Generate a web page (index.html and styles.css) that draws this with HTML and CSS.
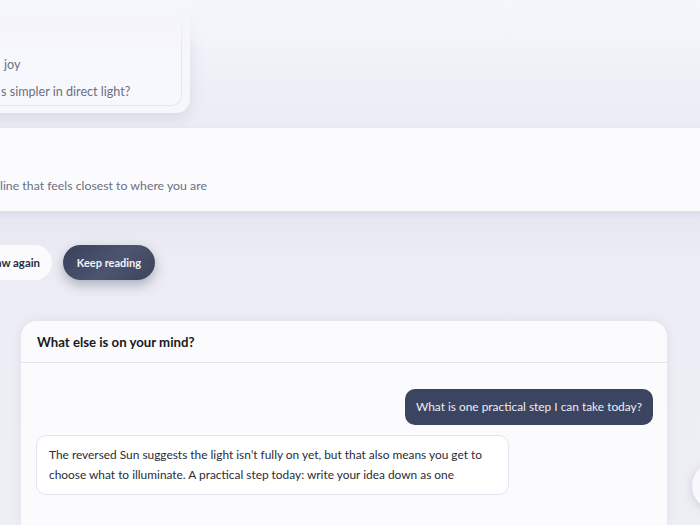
FILE: index.html
```html
<!DOCTYPE html>
<html lang="en">
<head>
<meta charset="utf-8">
<title>Reading</title>
<link rel="stylesheet" href="styles.css">
</head>
<body>
<div class="stage">
  <div class="top-card">
    <div class="prompt-box">
      <p class="prompt-line prompt-joy">joy</p>
      <p class="prompt-line">s simpler in direct light?</p>
    </div>
  </div>

  <div class="panel">
    <p class="panel-text">line that feels closest to where you are</p>
  </div>

  <div class="actions">
    <button class="pill pill-light">Draw again</button>
    <button class="pill pill-dark">Keep reading</button>
  </div>

  <section class="chat">
    <header class="chat-head">What else is on your mind?</header>
    <div class="chat-body">
      <div class="msg msg-user">What is one practical step I can take today?</div>
      <div class="msg msg-bot">The reversed Sun suggests the light isn’t fully on yet, but that also means you get to choose what to illuminate. A practical step today: write your idea down as one</div>
    </div>
  </section>

  <div class="top-fade"></div>
  <div class="fab"></div>
</div>
</body>
</html>
```

FILE: styles.css
```css
* { box-sizing: border-box; }
html, body {
  margin: 0;
  width: 700px;
  height: 525px;
  overflow: hidden;
}
body {
  font-family: "Lato", "Open Sans", "Liberation Sans", sans-serif;
  background: linear-gradient(180deg, #f4f4fb 0px, #f2f2f9 45px, #eeeef6 90px, #ececf4 128px, #e6e7ef 215px, #ececf4 260px, #eeeef5 525px);
  color: #2a2c38;
}
.stage {
  position: relative;
  width: 700px;
  height: 525px;
  display: flex;
  flex-direction: column;
}
p { margin: 0; }

.top-card {
  width: 400px;
  height: 113px;
  margin-left: -210px;
  padding: 0 8px 7px 8px;
  background: #f6f7fc;
  border-radius: 0 0 14px 14px;
  box-shadow: 0 6px 14px rgba(150, 152, 180, 0.22);
  display: flex;
  flex-direction: column;
  justify-content: flex-end;
}
.prompt-box {
  height: 100px;
  border: 1px solid #e4e5ee;
  border-top: none;
  border-radius: 0 0 10px 10px;
  background: #f7f8fd;
  padding: 0 0 0 202px;
  display: flex;
  flex-direction: column;
  justify-content: flex-end;
}
.prompt-line {
  font-size: 12.6px;
  line-height: 27px;
  color: #6c6f82;
  white-space: nowrap;
}
.prompt-joy { padding-left: 3px; }

.top-fade {
  position: absolute;
  left: 0;
  top: 0;
  width: 700px;
  height: 52px;
  background: linear-gradient(180deg, rgba(245, 245, 252, 0.96) 0%, rgba(244, 244, 251, 0.75) 55%, rgba(244, 244, 251, 0) 100%);
  pointer-events: none;
}

.panel {
  margin-top: 15px;
  height: 84px;
  margin-left: -20px;
  margin-right: -20px;
  background: #fbfbfe;
  border-bottom: 1px solid #e0e1ea;
  box-shadow: 0 2px 6px rgba(150, 152, 180, 0.15);
  display: flex;
  align-items: flex-end;
  padding: 0 0 17px 20px;
}
.panel-text {
  font-size: 12.3px;
  line-height: 16px;
  color: #6c6f82;
  white-space: nowrap;
}

.actions {
  margin-top: 33px;
  height: 35px;
  display: flex;
  gap: 11px;
}
.pill {
  height: 35px;
  border: none;
  border-radius: 18px;
  font-family: inherit;
  font-weight: 700;
  font-size: 11px;
  padding: 0 14px;
  white-space: nowrap;
}
.pill-light {
  width: 120px;
  margin-left: -68px;
  text-align: right;
  padding-right: 12px;
  font-size: 11.4px;
  background: #fbfbfe;
  color: #2a2d3a;
  overflow: hidden;
}
.pill-dark {
  width: 92px;
  padding: 0;
  text-align: center;
  color: #f3f4f8;
  background: linear-gradient(135deg, #3a4159 0%, #4c5470 55%, #3c435b 100%);
  box-shadow: 0 5px 12px rgba(55, 62, 90, 0.35);
}

.chat {
  margin-top: 41px;
  margin-left: 21px;
  width: 646px;
  flex: 1;
  background: #fbfbfe;
  border-radius: 16px 16px 0 0;
  box-shadow: 0 0 10px rgba(160, 162, 190, 0.18);
}
.chat-head {
  height: 42px;
  padding: 0 16px;
  display: flex;
  align-items: center;
  font-size: 13.2px;
  font-weight: 700;
  color: #181a24;
  border-bottom: 1px solid #e2e3eb;
}
.chat-body {
  padding: 26px 14px 0 15px;
  display: flex;
  flex-direction: column;
  gap: 10px;
}
.msg {
  font-size: 11.9px;
  line-height: 20px;
  border-radius: 10px;
}
.msg-user {
  align-self: flex-end;
  height: 36px;
  padding: 8px 11px;
  background: #3b4460;
  color: #eceef5;
  white-space: nowrap;
}
.msg-bot {
  align-self: flex-start;
  width: 473px;
  padding: 9px 12px;
  background: #ffffff;
  border: 1px solid #e4e5ee;
  color: #2a2c38;
}

.fab {
  position: absolute;
  left: 692px;
  top: 462px;
  width: 48px;
  height: 48px;
  border-radius: 50%;
  background: #f8f8fc;
  box-shadow: 0 2px 8px rgba(140, 142, 170, 0.35);
}
```
